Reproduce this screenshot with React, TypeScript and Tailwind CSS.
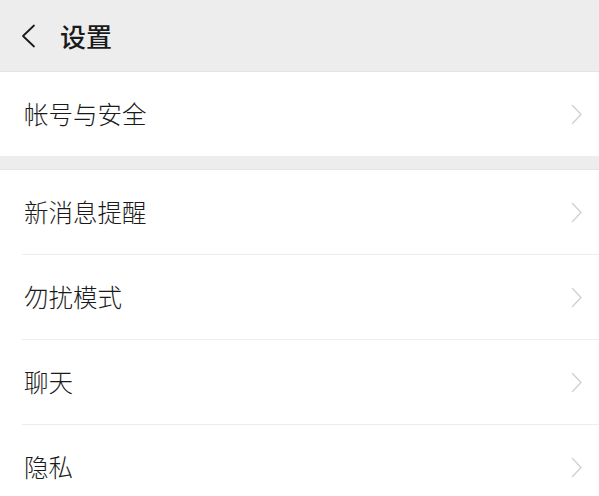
import React from "react";

const font = { fontFamily: '"Noto Sans CJK SC", "Noto Sans", sans-serif' };

function Chevron() {
  return (
    <svg width="12" height="21" viewBox="0 0 12 21" fill="none" className="mr-[16px]">
      <path d="M1.5 1.5 L10 10.5 L1.5 19.5" stroke="#d2d2d2" strokeWidth="1.5" strokeLinecap="round" strokeLinejoin="round" />
    </svg>
  );
}

function Row({ label, divider }: { label: string; divider?: boolean }) {
  return (
    <div className="bg-white">
      <div className="h-[84px] flex items-center justify-between pl-[24px]">
        <span className="text-[24.5px] leading-none font-light text-[#1a1a1a]">{label}</span>
        <Chevron />
      </div>
      {divider && <div className="ml-[22px] h-px bg-[#ededed]" />}
    </div>
  );
}

export default function App() {
  return (
    <div className="w-[599px] h-[496px] overflow-hidden bg-[#ededed]" style={font}>
      <div className="h-[72px] flex items-center border-b border-[#e3e3e3] bg-[#ededed]">
        <svg width="16" height="24" viewBox="0 0 16 24" className="ml-[20px]" fill="none">
          <path d="M14 1.5 L3 12 L14 22.5" stroke="#1a1a1a" strokeWidth="1.8" strokeLinecap="round" strokeLinejoin="round" />
        </svg>
        <span className="ml-[24px] text-[26px] leading-none font-medium text-[#1a1a1a]">设置</span>
      </div>
      <Row label="帐号与安全" />
      <div className="h-[14px] bg-[#ededed] border-b border-[#e3e3e3]" />
      <Row label="新消息提醒" divider />
      <Row label="勿扰模式" divider />
      <Row label="聊天" divider />
      <Row label="隐私" />
    </div>
  );
}
